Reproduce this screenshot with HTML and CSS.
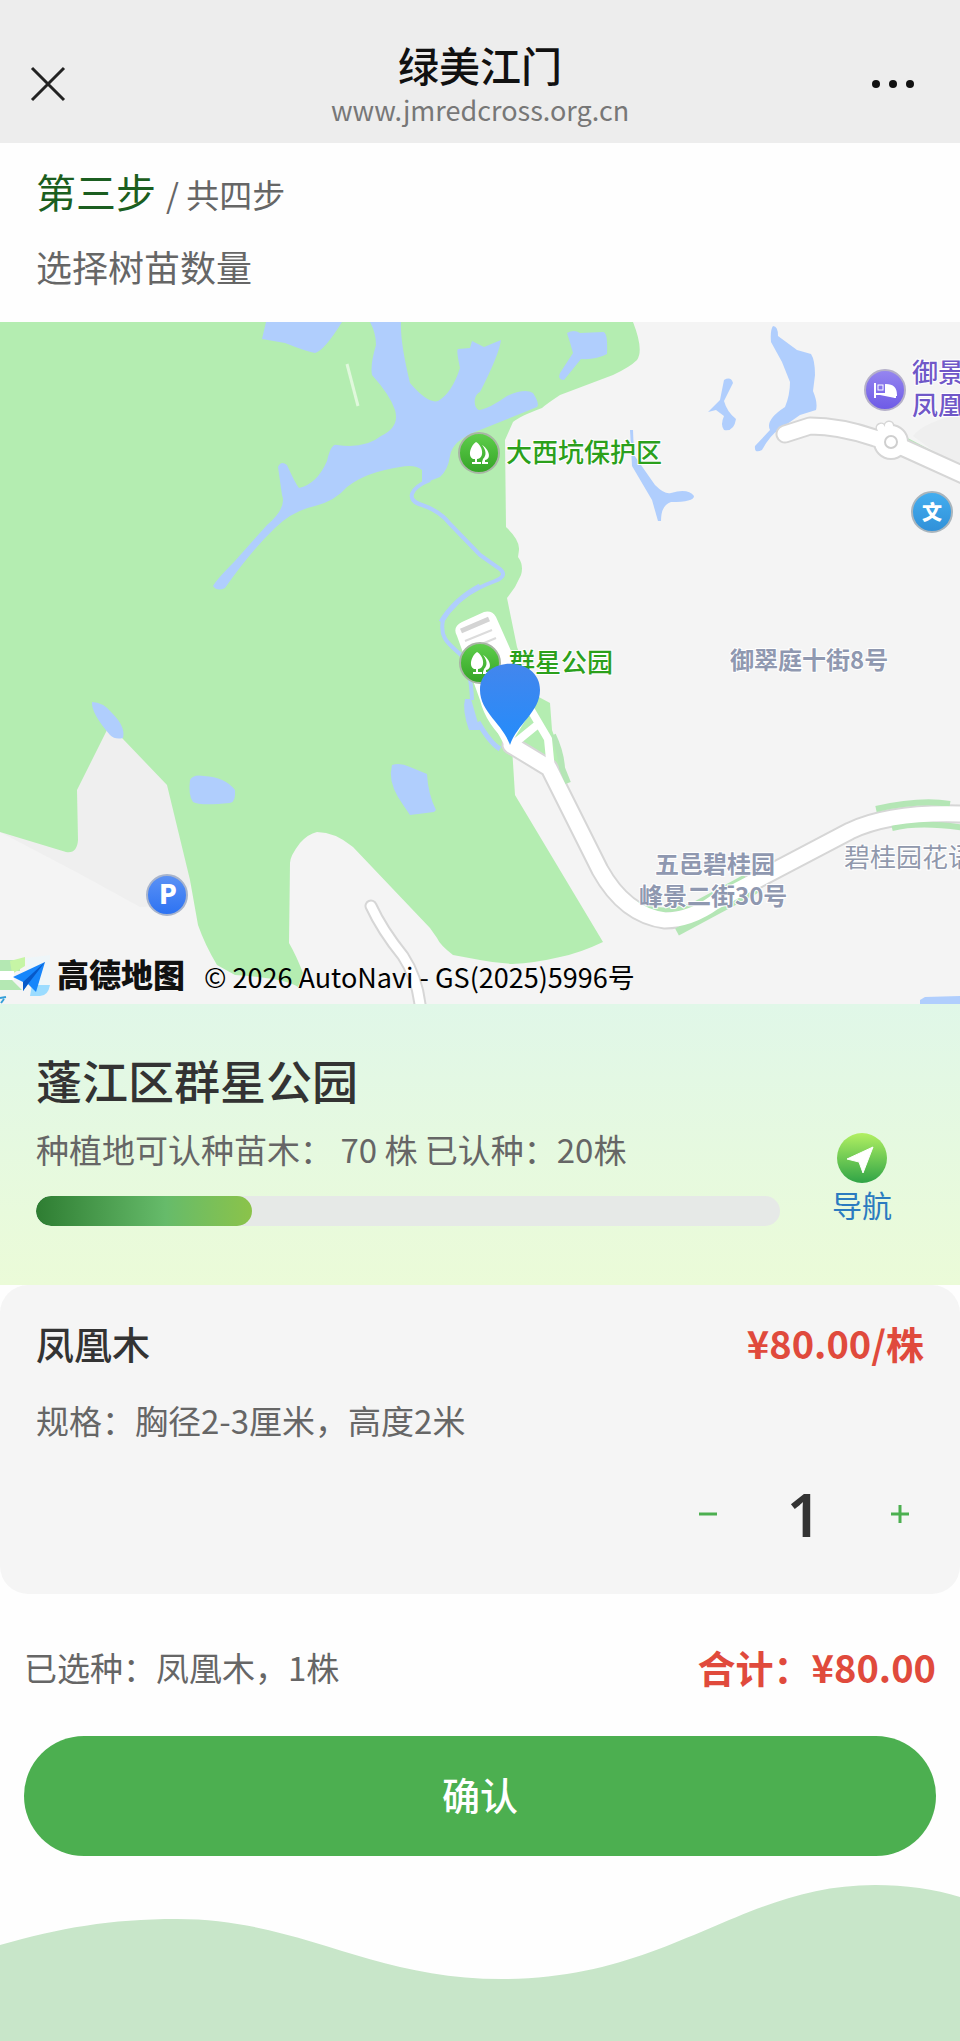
FILE: index.html
```html
<!DOCTYPE html>
<html lang="zh-CN">
  <head>
    <meta charset="UTF-8" />
    <meta name="viewport" content="width=device-width, initial-scale=1.0" />
    <title>绿美江门</title>
    <link rel="stylesheet" href="styles.css" />
  </head>
  <body>
    <header class="topbar">
      <button class="icon-btn" aria-label="关闭">
        <svg width="36" height="36" viewBox="0 0 36 36">
          <path d="M2 2L34 34M34 2L2 34" stroke="#222" stroke-width="3" />
        </svg>
      </button>
      <div class="site">
        <h1>绿美江门</h1>
        <p>www.jmredcross.org.cn</p>
      </div>
      <button class="icon-btn" aria-label="更多">
        <svg width="44" height="36" viewBox="0 0 44 36" fill="#111">
          <circle cx="4" cy="18" r="4" />
          <circle cx="21" cy="18" r="4" />
          <circle cx="38" cy="18" r="4" />
        </svg>
      </button>
    </header>

    <main>
      <section class="steps">
        <p class="step"><strong>第三步</strong> / 共四步</p>
        <h2>选择树苗数量</h2>
      </section>

      <section class="map">
        <svg viewBox="0 322 960 682" preserveAspectRatio="xMidYMid slice">
          <defs>
            <linearGradient id="green" x1="0" y1="0" x2="0" y2="1">
              <stop offset="0" stop-color="#5fcf4c" />
              <stop offset="1" stop-color="#34a326" />
            </linearGradient>
            <linearGradient id="blue" x1="0" y1="0" x2="0" y2="1">
              <stop offset="0" stop-color="#5c92f5" />
              <stop offset="1" stop-color="#2c72f2" />
            </linearGradient>
            <linearGradient id="sky" x1="0" y1="0" x2="0" y2="1">
              <stop offset="0" stop-color="#43aef0" />
              <stop offset="1" stop-color="#3090d8" />
            </linearGradient>
            <linearGradient id="violet" x1="0" y1="0" x2="0" y2="1">
              <stop offset="0" stop-color="#9686f0" />
              <stop offset="1" stop-color="#6d5ae6" />
            </linearGradient>
            <linearGradient id="pin" x1="0" y1="0" x2="0" y2="1">
              <stop offset="0" stop-color="#4386ed" />
              <stop offset="1" stop-color="#238cfb" />
            </linearGradient>
            <g id="tree">
              <circle r="20" fill="url(#green)" stroke="#a9b5a5" stroke-width="2" />
              <path d="M-3 -11C-8 -8 -12 3 -6 6L-4 6V9H-7V11H2V9H-2V6C6 5 4 -7 -3 -11Z" fill="#fff" />
              <path d="M3 -8C10 -4 13 6 6 7V9H9V11H3V9L4 6C8 2 7 -3 3 -8Z" fill="#fff" />
            </g>
          </defs>

          <!-- land -->
          <rect y="322" width="960" height="682" fill="#f4f4f4" />
          <path d="M0 832L107 730L122 738L169 785L192 880L180 905L140 907L80 874Z" fill="#efefef" />
          <path d="M913 436Q925 421 960 415V470Z" fill="#efefef" />
          <path
            d="M0 322H633Q644 350 637 360Q630 367 613 375L560 395Q545 405 542 408Q520 416 513 422L505 440L506 527Q520 540 519 550L518 557Q524 565 521 575L515 587L507 598L517 647L535 695L550 703L552 730Q560 750 564 770L569 781L560 785L512 747L515 795L603 942Q580 953 560 957Q535 963 512 964Q495 963 480 960L453 955Q440 945 437 938L430 928L353 847Q335 832 317 832Q308 834 300 843Q290 856 290 863L289 943Q296 955 303 973L298 987Q285 978 235 975L217 965Q205 945 198 925L190 880L167 785L122 738L107 730L77 790L78 840Q77 854 66 852L0 832Z"
            fill="#b4edb1"
          />

          <!-- water -->
          <g fill="#b0cefd">
            <path d="M266 322H342Q324 351 315 353Q305 351 285 343L262 339Z" />
            <path d="M370 322H401Q400 342 410 383Q428 404 438 401Q452 393 460 368Q456 350 458 349L470 348L472 341L484 347L501 340Q499 355 480 392C472 396 474 410 480 410Q490 408 507 396Q525 388 533 393Q540 404 537 407Q520 414 480 430Q452 440 450 456Q448 470 440 477L422 484V470Q415 464 400 467Q366 472 347 487Q335 501 315 506Q292 511 275 528Q250 552 225 588Q217 592 213 586Q217 579 234 562L267 525Q287 508 282 495L278 467Q281 460 287 465Q295 483 299 488Q317 484 327 461Q331 443 337 445Q365 449 381 436Q400 427 395 410Q390 395 372 375Q370 365 376 345Q376 333 370 322Z" />
            <path d="M567 333Q574 329 580 333L603 332Q608 332 607 354Q596 360 581 359L564 380Q557 380 560 373L573 353Q570 342 567 333Z" />
            <path d="M773 326Q778 326 778 336L797 350L811 354Q815 360 815 375L813 391Q818 403 816 410L800 415L780 429Q770 435 762 450Q754 454 755 446L770 430Q765 420 785 407Q790 395 790 382L782 362L771 342Q770 330 773 326Z" />
            <path d="M724 380Q731 376 733 383L724 401Q727 412 736 419Q734 432 724 430Q720 425 724 416L716 410L708 412L720 400Z" />
            <path d="M630 430L633 430L634 455L655 485Q665 495 671 493Q688 488 694 496Q694 502 671 502Q661 505 661 521H658L652 500L632 466Z" />
            <path d="M92 702Q103 702 112 713Q126 727 123 738Q115 740 110 735Q91 713 92 702Z" />
            <path d="M190 780Q193 774 204 776Q225 777 235 790Q236 802 230 803Q200 806 193 802Q188 795 190 780Z" />
            <path d="M392 765Q400 762 410 767L427 774Q428 794 436 810L434 812L410 815Q403 805 398 797Q388 780 392 765Z" />
            <path d="M465 699H471L480 730H469Q462 710 465 699Z" />
            <path d="M920 1000L925 997L960 996V1004H920Z" />
          </g>
          <g fill="none" stroke="#b0cefd">
            <path d="M430 480C410 488 405 500 422 505Q440 511 450 524L480 555L500 569Q508 576 495 581C470 590 450 605 443 620C439 640 451 645 462 656Q471 670 472 700" stroke-width="4" />
            <path d="M478 722Q490 743 500 749" stroke-width="5" />
            <path d="M441 622Q455 599 480 586" stroke-width="5" />
          </g>
          <path d="M347 364L358 406" stroke="#e0f8dc" stroke-width="3" />

          <!-- roads -->
          <path d="M903 440L960 470" stroke="#b4e6b5" stroke-width="8" />
          <g fill="none" stroke-linejoin="round">
            <g stroke="#d6d6d6" stroke-width="19" stroke-linecap="round">
              <path d="M785 434L810 426Q840 426 875 438L895 444L970 478" />
              <path d="M511 745L549 768L600 870Q625 915 665 920Q690 920 715 902L850 831Q890 812 960 814H970" />
              <path d="M371 906Q382 930 403 956Q419 980 421 1015" stroke-width="13" />
              <path d="M884 434L881 428M890 433L889 426" stroke-width="11" />
            </g>
            <circle cx="891" cy="442" r="13" stroke="#d6d6d6" stroke-width="10" />
            <g stroke="#b4e6b5" stroke-width="6">
              <path d="M876 809Q920 799 950 804" />
              <path d="M892 828Q920 821 965 828" />
              <path d="M677 932L757 889" stroke-width="8" />
              <path d="M632 902Q660 917 695 904L745 877" stroke-width="5" />
              <path d="M553 735Q561 752 562 768L568 783" />
            </g>
            <g stroke="#fff" stroke-width="15" stroke-linecap="round">
              <path d="M785 434L810 426Q840 426 875 438L895 444L970 478" />
              <path d="M511 745L549 768L600 870Q625 915 665 920Q690 920 715 902L850 831Q890 812 960 814H970" />
              <path d="M371 906Q382 930 403 956Q419 980 421 1015" stroke-width="9" />
              <path d="M525 700L548 739L551 770M490 710L510 747L537 725" stroke-width="8" />
              <path d="M884 434L881 428M890 433L889 426" stroke-width="8" />
            </g>
            <circle cx="891" cy="442" r="11" stroke="#fff" stroke-width="10" />
            <circle cx="891" cy="442" r="6" stroke="#cfcfcf" stroke-width="2" />
          </g>
          <path d="M457 636Q452 627 462 622L484 612Q492 610 496 617L535 705L510 745Q486 725 480 700Z" fill="#fff" />
          <path d="M461 631L489 619" stroke="#d4d4d4" stroke-width="5" />
          <path d="M465 641L492 630M470 649L496 638" stroke="#dcdcdc" stroke-width="2" />

          <!-- places -->
          <use href="#tree" x="479" y="453" />
          <use href="#tree" x="480" y="663" />
          <g class="place park">
            <text x="506" y="462">大西坑保护区</text>
            <text x="509" y="672">群星公园</text>
          </g>
          <g class="hotel">
            <circle cx="885" cy="390" r="20" fill="url(#violet)" stroke="#b5b0c9" stroke-width="2" />
            <path d="M875 383V398M875 394H895V398M886 385Q896 385 896 395H886Z" fill="#fff" stroke="#fff" stroke-width="2" />
            <rect x="878" y="385" width="5" height="5" fill="none" stroke="#fff" />
            <text class="place" x="912" y="382">御景</text>
            <text class="place" x="912" y="415">凤凰</text>
          </g>
          <circle cx="932" cy="512" r="20" fill="url(#sky)" stroke="#a9b5bd" stroke-width="2" />
          <text class="badge" x="932" y="520">文</text>
          <circle cx="167" cy="895" r="20" fill="url(#blue)" stroke="#a8b4cc" stroke-width="2" />
          <text class="badge letter" x="168" y="904">P</text>
          <g class="place street">
            <text x="730" y="669">御翠庭十街8号</text>
            <text x="655" y="873">五邑碧桂园</text>
            <text x="639" y="905">峰景二街30号</text>
          </g>
          <text class="place estate" x="844" y="867">碧桂园花语</text>
          <path d="M510 745C503 724 480 712 480 690C480 655 540 655 540 690C540 712 517 724 510 745Z" fill="url(#pin)" />

          <!-- map provider -->
          <path d="M0 960H20V971H0ZM0 980H12L22 990H0Z" fill="#b4e8b3" />
          <path d="M10 961L25 957V966L12 974Z" fill="#c6f5a5" />
          <path d="M0 971H14V980H0Z" fill="#fff" />
          <path d="M26 958L50 955V985H30Z" fill="#eef6f9" />
          <path d="M32 985H50Q48 996 40 996H30Z" fill="#9bdcff" />
          <path d="M13 977L45 962L36 992L28 984L23 991V982Z" fill="#1686fb" />
          <path d="M23 982L45 962L28 984L23 991Z" fill="#0759c8" />
          <path d="M0 998L6 997M1 1003L4 999" stroke="#359fd8" stroke-width="2" />
          <text class="provider" x="57" y="987">高德地图</text>
          <text class="copyright" x="204" y="988">© 2026 AutoNavi - GS(2025)5996号</text>
        </svg>
      </section>

      <section class="site-info">
        <div class="site-detail">
          <h2>蓬江区群星公园</h2>
          <p>种植地可认种苗木： 70 株 已认种：20株</p>
          <div class="progress"><span style="width: 29%"></span></div>
        </div>
        <a class="navigate" href="#">
          <svg width="52" height="52" viewBox="0 0 52 52">
            <defs>
              <linearGradient id="nav" x1="0" y1="0" x2="0" y2="1">
                <stop offset="0" stop-color="#b2f062" />
                <stop offset="1" stop-color="#2fa446" />
              </linearGradient>
            </defs>
            <circle cx="26" cy="26" r="25" fill="url(#nav)" />
            <path d="M37 15L27 41L23 30L11 27Z" fill="#fff" stroke="#fff" stroke-linejoin="round" />
          </svg>
          导航
        </a>
      </section>

      <section class="product">
        <div class="row">
          <h3>凤凰木</h3>
          <p class="price">¥80.00/株</p>
        </div>
        <p class="spec">规格：胸径2-3厘米，高度2米</p>
        <div class="stepper">
          <button id="minus" aria-label="减少">
            <svg width="18" height="18"><path d="M0 9H18" /></svg>
          </button>
          <input id="amount" type="text" value="1" aria-label="数量" />
          <button id="plus" aria-label="增加">
            <svg width="18" height="18"><path d="M0 9H18M9 0V18" /></svg>
          </button>
        </div>
      </section>

      <section class="summary">
        <div class="row">
          <p>已选种：凤凰木，<span id="count">1</span>株</p>
          <p class="price">合计：¥<span id="total">80.00</span></p>
        </div>
        <button class="confirm">确认</button>
      </section>
    </main>

    <footer>
      <svg viewBox="0 0 960 156" preserveAspectRatio="none">
        <path d="M0 60C60 43 110 34 177 34C300 34 370 94 502 94C670 94 740 0 875 0C905 0 935 4 960 12V156H0Z" fill="#c8e6c9" />
      </svg>
    </footer>

    <script>
      const amount = document.querySelector("#amount");

      function change(step) {
        const n = Math.max(1, Number(amount.value) + step);
        amount.value = n;
        document.querySelector("#count").textContent = n;
        document.querySelector("#total").textContent = (n * 80).toFixed(2);
      }

      document.querySelector("#minus").addEventListener("click", () => change(-1));
      document.querySelector("#plus").addEventListener("click", () => change(1));
    </script>
  </body>
</html>
```

FILE: styles.css
```css
* {
  box-sizing: border-box;
}

body {
  margin: 0;
  background-color: #fefefe;
  color: #666;
  font-family: "Noto Sans CJK SC", sans-serif;
  font-size: 33px;
}

h1,
h2,
h3,
p {
  margin: 0;
}

h1,
h2,
h3 {
  font-weight: 500;
}

button {
  padding: 0;
  border: none;
  background: none;
  font-family: inherit;
  cursor: pointer;
}

svg {
  display: block;
}

.topbar {
  display: flex;
  justify-content: space-between;
  align-items: center;
  padding: 38px 30px 13px;
  background-color: #ededed;
}

.icon-btn {
  width: 58px;
}

.site {
  text-align: center;
}

.site h1 {
  color: #111;
  font-size: 41px;
  line-height: 52px;
}

.site p {
  color: #777;
  font-size: 27px;
  line-height: 40px;
}

.steps {
  padding: 20px 36px 32px;
}

.step {
  display: flex;
  align-items: baseline;
  gap: 10px;
  height: 56px;
  line-height: 56px;
}

.step strong {
  color: #1b5e20;
  font-size: 40px;
  font-weight: 400;
}

.steps h2 {
  margin-top: 23px;
  font-size: 36px;
  font-weight: 400;
  line-height: 48px;
}

.map svg {
  width: 100%;
  height: 682px;
}

.place {
  font-size: 26px;
  font-weight: 500;
  paint-order: stroke;
  stroke: #fff;
  stroke-width: 2px;
}

.park {
  fill: #2ba01b;
}

.hotel text {
  fill: #7058c8;
}

.street {
  fill: #8f98b0;
  font-size: 24px;
  font-weight: 700;
}

.estate {
  fill: #9098ac;
  font-weight: 400;
}

.badge {
  fill: #fff;
  font-size: 20px;
  font-weight: 900;
  text-anchor: middle;
}

.letter {
  font-size: 26px;
}

.provider {
  fill: #111;
  font-size: 32px;
  font-weight: 900;
}

.copyright {
  fill: #000;
  font-size: 27px;
}

.site-info {
  display: flex;
  align-items: flex-end;
  gap: 52px;
  padding: 47px 68px 59px 36px;
  background: linear-gradient(#e0f7e8, #ebfbd8);
}

.site-detail {
  flex: 1;
}

.site-detail h2 {
  color: #333;
  font-size: 46px;
  line-height: 56px;
}

.site-detail p {
  margin: 18px 0 23px;
  line-height: 48px;
}

.progress {
  height: 30px;
  overflow: hidden;
  border-radius: 15px;
  background-color: #e6e9e7;
}

.progress span {
  display: block;
  height: 100%;
  border-radius: 15px;
  background: linear-gradient(90deg, #2e7d32, #66bb6a 60%, #8bc34a);
}

.navigate {
  display: flex;
  flex-direction: column;
  align-items: center;
  padding-bottom: 2px;
  color: #2b7bc0;
  font-size: 30px;
  line-height: 40px;
  text-decoration: none;
}

.row {
  display: flex;
  justify-content: space-between;
  align-items: center;
}

.product {
  padding: 34px 36px 40px;
  border-radius: 28px;
  background-color: #f5f5f5;
}

.product h3 {
  color: #333;
  font-size: 38px;
  line-height: 48px;
}

.price {
  color: #e04a3c;
  font-size: 38px;
  font-weight: 700;
  line-height: 48px;
}

.spec {
  margin-top: 29px;
  line-height: 48px;
}

.stepper {
  display: flex;
  justify-content: flex-end;
  align-items: center;
  margin-top: 30px;
}

.stepper button {
  display: flex;
  justify-content: center;
  align-items: center;
  width: 48px;
  height: 48px;
}

.stepper path {
  stroke: #4caf50;
  stroke-width: 3px;
}

.stepper input {
  width: 144px;
  height: 80px;
  padding: 0;
  border: none;
  background: none;
  color: #333;
  font-family: "Noto Sans", sans-serif;
  font-size: 60px;
  font-weight: 600;
  text-align: center;
}

.summary {
  padding: 49px 24px 29px;
}

.confirm {
  width: 100%;
  height: 120px;
  margin-top: 45px;
  padding-bottom: 6px;
  border-radius: 60px;
  background-color: #4caf50;
  color: #fff;
  font-size: 38px;
  font-weight: 500;
}

footer svg {
  width: 100%;
  height: 156px;
}
```
